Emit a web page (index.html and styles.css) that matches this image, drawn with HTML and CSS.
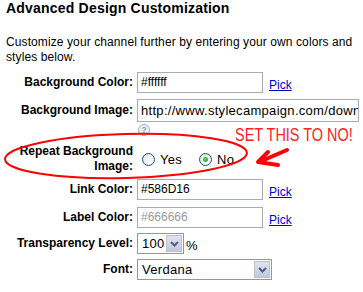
FILE: index.html
```html
<!DOCTYPE html>
<html>
<head>
<meta charset="utf-8">
<link rel="stylesheet" href="styles.css">
</head>
<body>
<div class="page">
  <h1 class="title">Advanced Design Customization</h1>
  <p class="intro">Customize your channel further by entering your own colors and styles below.</p>
  <div class="form">
    <div class="row row-bgcolor">
      <span class="lbl">Background Color:</span>
      <span class="field short">#ffffff</span>
      <a class="pick" href="#">Pick</a>
    </div>
    <div class="row row-bgimage">
      <span class="lbl">Background Image:</span>
      <span class="field long">http://www.stylecampaign.com/downloads/bg.gif</span>
    </div>
    <div class="row row-help">
      <span class="lbl"></span>
      <span class="help">?</span>
    </div>
    <div class="row row-repeat">
      <span class="lbl">Repeat Background<br>Image:</span>
      <span class="radio"></span><span class="opt">Yes</span>
      <span class="radio checked"></span><span class="opt">No</span>
    </div>
    <div class="row row-link">
      <span class="lbl">Link Color:</span>
      <span class="field short">#586D16</span>
      <a class="pick" href="#">Pick</a>
    </div>
    <div class="row row-label">
      <span class="lbl">Label Color:</span>
      <span class="field short muted">#666666</span>
      <a class="pick" href="#">Pick</a>
    </div>
    <div class="row row-trans">
      <span class="lbl">Transparency Level:</span>
      <span class="select small"><span class="val">100</span><span class="btn"><svg width="9" height="6" viewBox="0 0 9 6"><path d="M1 1 L4.5 4.5 L8 1" fill="none" stroke="#4d6185" stroke-width="2"/></svg></span></span>
      <span class="pct">%</span>
    </div>
    <div class="row row-font">
      <span class="lbl">Font:</span>
      <span class="select wide"><span class="val">Verdana</span><span class="btn"><svg width="9" height="6" viewBox="0 0 9 6"><path d="M1 1 L4.5 4.5 L8 1" fill="none" stroke="#4d6185" stroke-width="2"/></svg></span></span>
    </div>
  </div>
  <div class="note">SET THIS TO NO!</div>
  <svg class="annot" width="363" height="292" viewBox="0 0 363 292">
    <ellipse cx="126" cy="156" rx="121" ry="22" fill="none" stroke="#ff0000" stroke-width="2" transform="rotate(-1.5 126 156)"/>
    <path d="M287 150 L259 162" fill="none" stroke="#ff0000" stroke-width="4" stroke-linecap="round"/>
    <path d="M268 152 L258 162 L278 165" fill="none" stroke="#ff0000" stroke-width="4" stroke-linecap="round" stroke-linejoin="round"/>
  </svg>
</div>
</body>
</html>
```
FILE: styles.css
```css
html, body {
  margin: 0;
  padding: 0;
  background: #ffffff;
}
.page {
  position: relative;
  width: 363px;
  height: 292px;
  overflow: hidden;
  font-family: "Liberation Sans", Arial, sans-serif;
  color: #000;
}
.title {
  margin: 0;
  padding: 0 0 0 6px;
  font-size: 14px;
  line-height: 17px;
  font-weight: bold;
  letter-spacing: 0.2px;
}
.intro {
  margin: 18px 0 0 0;
  padding: 0 6px;
  font-size: 12px;
  line-height: 15px;
  letter-spacing: 0.1px;
}
.form {
  margin-top: 7px;
}
.row {
  display: flex;
  align-items: center;
}
.lbl {
  width: 127px;
  margin-left: 6px;
  margin-right: 4px;
  text-align: right;
  font-weight: bold;
  font-size: 12px;
  line-height: 15px;
  flex: none;
}
.field {
  box-sizing: border-box;
  height: 21px;
  border: 1px solid #a5acb2;
  font-size: 12px;
  line-height: 19px;
  padding: 0 3px;
  white-space: nowrap;
  overflow: hidden;
  flex: none;
}
.field.short { width: 126px; }
.field.long { width: 222px; height: 23px; line-height: 21px; font-size: 13px; letter-spacing: 0.3px; }
.field.muted { color: #999999; }
.pick {
  margin-left: 6px;
  margin-top: 5px;
  font-size: 12px;
  color: #0000cc;
  text-decoration: underline;
}
.row-bgimage { margin-top: 6px; }
.row-help { height: 13px; margin-top: 1px; }
.help {
  box-sizing: border-box;
  width: 12px;
  height: 12px;
  margin-left: 1px;
  border-radius: 50%;
  border: 1px solid #9ab3c4;
  background: #eef3f6;
  color: #8aa3b3;
  font-size: 9px;
  line-height: 10px;
  text-align: center;
  font-weight: bold;
}
.row-repeat { margin-top: 8px; height: 30px; }
.radio {
  box-sizing: border-box;
  width: 13px;
  height: 13px;
  border-radius: 50%;
  border: 1px solid #1c5180;
  background: radial-gradient(circle at 65% 65%, #ffffff 0%, #dcdcd5 100%);
  margin-left: 5px;
  position: relative;
  flex: none;
}
.radio.checked::after {
  content: "";
  position: absolute;
  left: 3px;
  top: 3px;
  width: 5px;
  height: 5px;
  border-radius: 50%;
  background: radial-gradient(circle at 40% 40%, #55d451, #21a121);
}
.opt {
  font-size: 13px;
  margin-left: 5px;
  margin-right: 12px;
  letter-spacing: 0.3px;
}
.row-link { margin-top: 5px; }
.row-label { margin-top: 7px; }
.row-trans { margin-top: 5px; }
.row-font { margin-top: 5px; }
.select {
  box-sizing: border-box;
  height: 21px;
  border: 1px solid #7f9db9;
  display: flex;
  align-items: stretch;
  flex: none;
  background: #fff;
}
.select.small { width: 47px; }
.select.wide { width: 135px; }
.select .val {
  flex: 1;
  font-size: 13px;
  line-height: 19px;
  padding-left: 4px;
  letter-spacing: 0.3px;
}
.select .btn {
  width: 16px;
  margin: 1px;
  box-sizing: border-box;
  border: 1px solid #b9c1d4;
  background: linear-gradient(#e0e3ef, #c3c8da);
  display: flex;
  align-items: center;
  justify-content: center;
}
.pct {
  font-size: 13px;
  margin-left: 2px;
  margin-top: 3px;
}
.note {
  position: absolute;
  left: 235px;
  top: 125px;
  color: #ff2020;
  font-size: 19px;
  line-height: 20px;
  white-space: nowrap;
  transform: scaleX(0.76);
  transform-origin: 0 0;
}
.annot {
  position: absolute;
  left: 0;
  top: 0;
  pointer-events: none;
}
```
